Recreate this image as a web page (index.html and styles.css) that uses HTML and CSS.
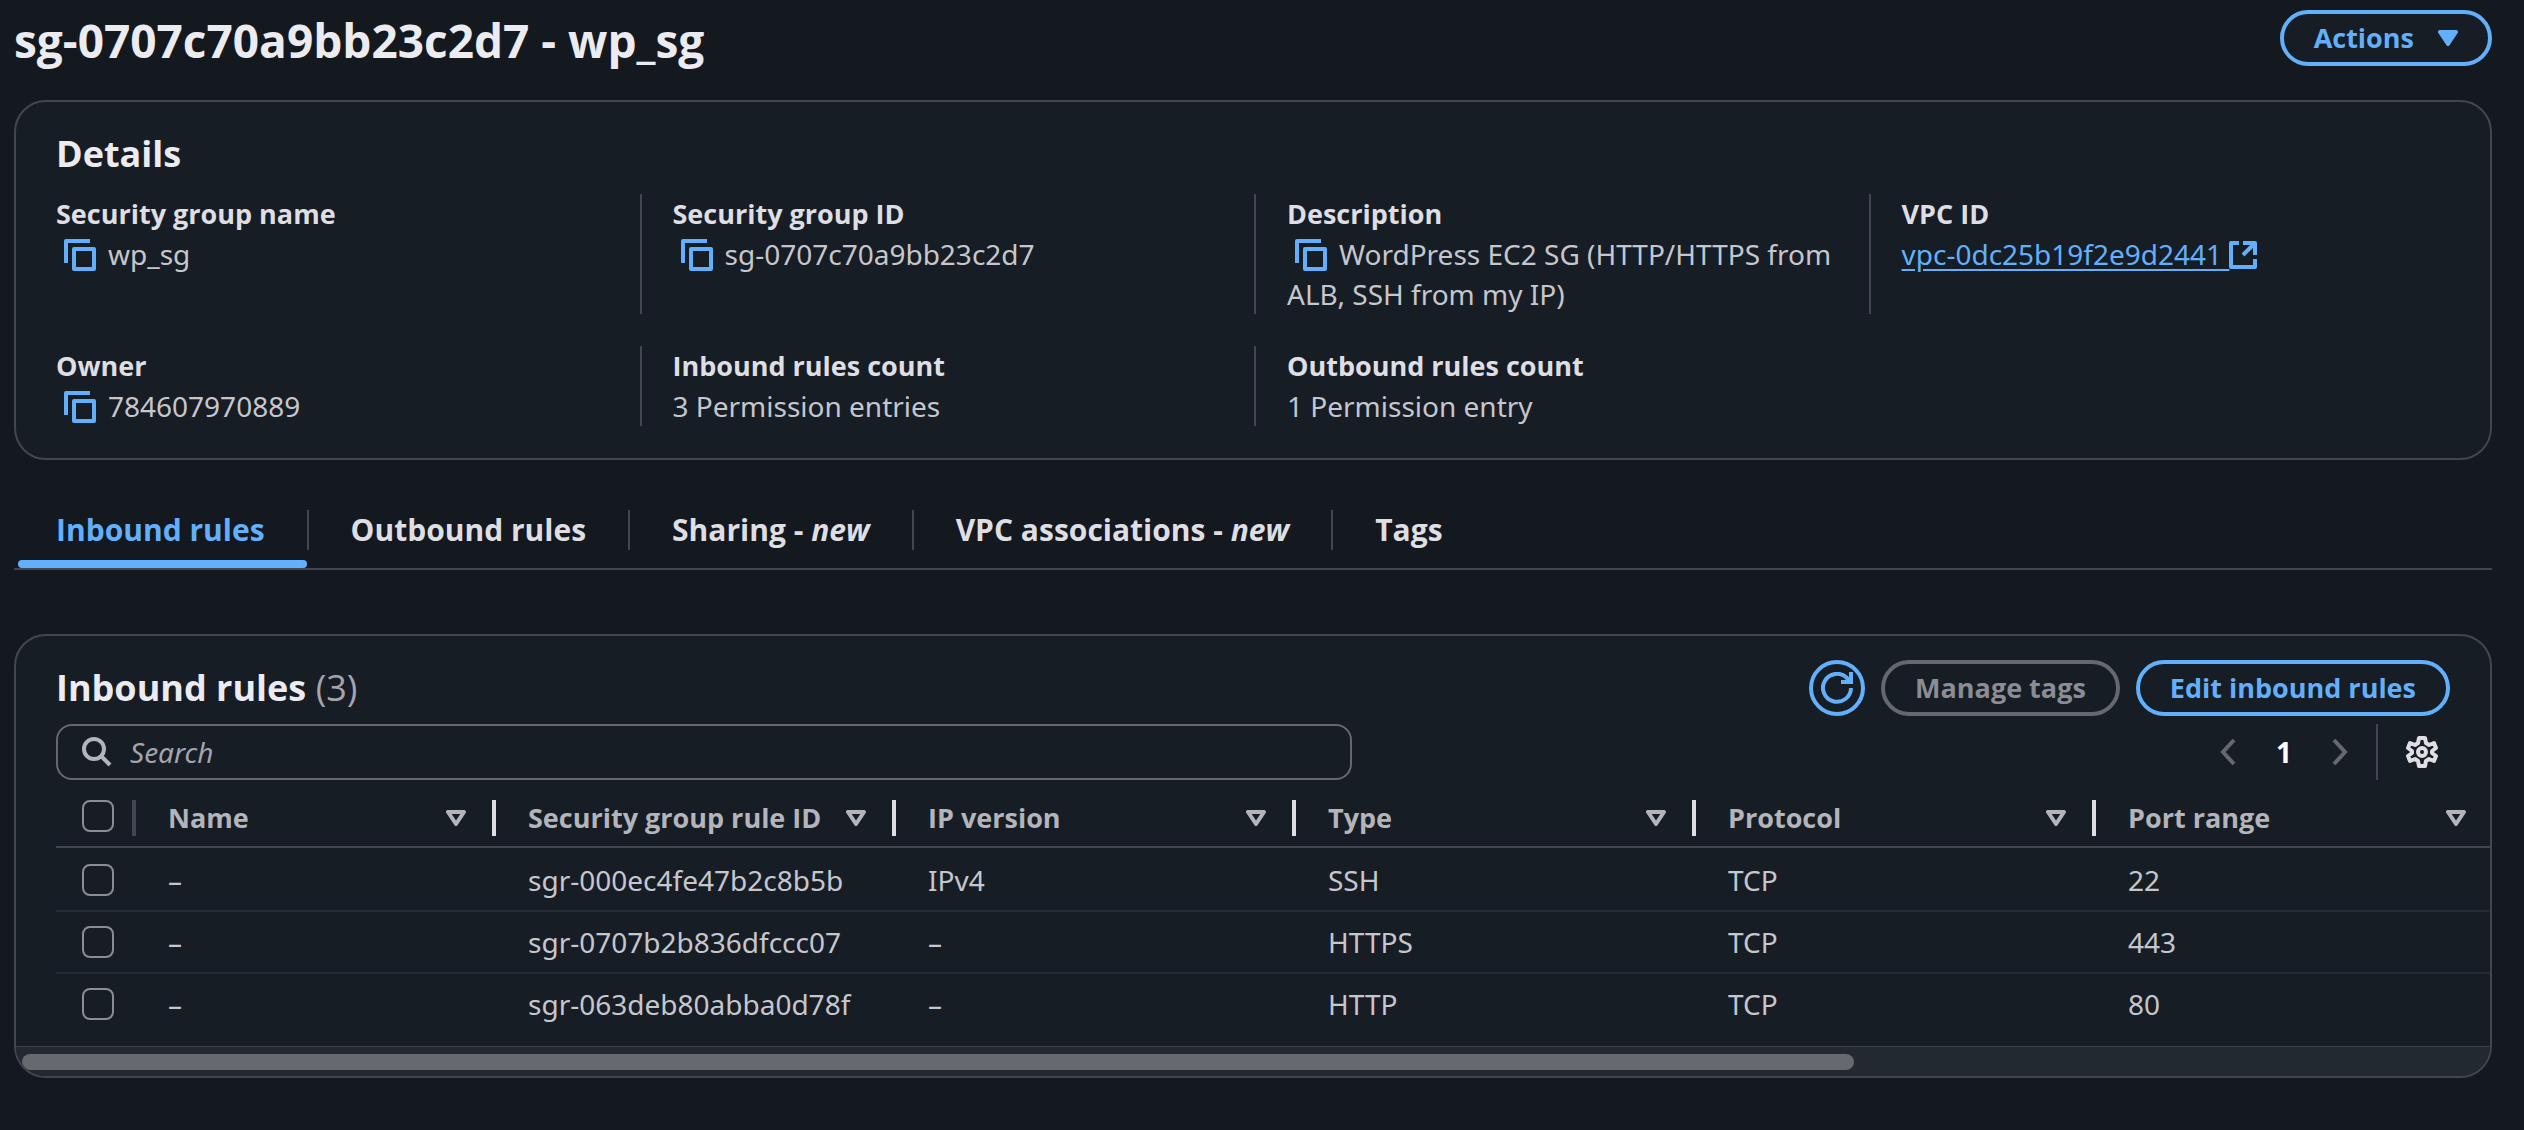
FILE: index.html
```html
<!DOCTYPE html>
<html lang="en">
<head>
<meta charset="utf-8">
<title>sg-0707c70a9bb23c2d7 - wp_sg</title>
<link rel="stylesheet" href="styles.css">
</head>
<body>
<svg class="sprite" aria-hidden="true">
  <symbol id="i-copy" viewBox="0 0 16 16"><path d="M1 12V1h12M5 5h10v10H5z" fill="none" stroke="currentColor" stroke-width="2" stroke-linejoin="round"/></symbol>
  <symbol id="i-caret" viewBox="0 0 20 16"><path d="M2 2h16l-8 12z" stroke="currentColor" stroke-width="4" stroke-linejoin="round"/></symbol>
</svg>
<main class="page">
  <header class="page-header">
    <h1>sg-0707c70a9bb23c2d7 - wp_sg</h1>
    <button type="button" class="btn">Actions <svg class="caret solid"><use href="#i-caret"/></svg></button>
  </header>

  <section class="card details">
    <h2>Details</h2>
    <dl class="grid">
      <div class="cell"><dt>Security group name</dt><dd><button type="button" class="copy" aria-label="Copy"><svg><use href="#i-copy"/></svg></button>wp_sg</dd></div>
      <div class="cell"><dt>Security group ID</dt><dd><button type="button" class="copy" aria-label="Copy"><svg><use href="#i-copy"/></svg></button>sg-0707c70a9bb23c2d7</dd></div>
      <div class="cell"><dt>Description</dt><dd><button type="button" class="copy" aria-label="Copy"><svg><use href="#i-copy"/></svg></button>WordPress EC2 SG (HTTP/HTTPS from ALB, SSH from my IP)</dd></div>
      <div class="cell"><dt>VPC ID</dt><dd><a href="#vpc">vpc-0dc25b19f2e9d2441 <svg class="ext" viewBox="0 0 28 28" fill="none" stroke="currentColor" stroke-width="4"><path d="M10 2H2v24h24v-8M14 2h12v12M26 2 14 14" stroke-linejoin="round"/></svg></a></dd></div>
      <div class="cell"><dt>Owner</dt><dd><button type="button" class="copy" aria-label="Copy"><svg><use href="#i-copy"/></svg></button>784607970889</dd></div>
      <div class="cell"><dt>Inbound rules count</dt><dd>3 Permission entries</dd></div>
      <div class="cell"><dt>Outbound rules count</dt><dd>1 Permission entry</dd></div>
    </dl>
  </section>

  <nav class="tabs">
    <a class="tab active" href="#inbound"><span>Inbound rules</span></a>
    <a class="tab" href="#outbound"><span>Outbound rules</span></a>
    <a class="tab" href="#sharing"><span>Sharing - <em>new</em></span></a>
    <a class="tab" href="#vpc"><span>VPC associations - <em>new</em></span></a>
    <a class="tab" href="#tags"><span>Tags</span></a>
  </nav>

  <section class="card rules">
    <div class="rules-header">
      <h2>Inbound rules <span class="count">(3)</span></h2>
      <div class="actions">
        <button type="button" class="btn round" aria-label="Refresh"><svg viewBox="0 0 32 32" fill="none" stroke="currentColor" stroke-width="4"><path d="M30 16a14 14 0 1 1-4-10l3 4M30 0v10H20"/></svg></button>
        <button type="button" class="btn" disabled>Manage tags</button>
        <button type="button" class="btn">Edit inbound rules</button>
      </div>
    </div>
    <div class="tools">
      <label class="search">
        <svg viewBox="0 0 30 30" fill="none" stroke="currentColor" stroke-width="4"><circle cx="12" cy="12" r="10"/><path d="m19 19 9 9"/></svg>
        <input type="search" placeholder="Search" aria-label="Search">
      </label>
      <div class="pager">
        <button type="button" class="icon" aria-label="Previous page"><svg viewBox="0 0 16 28" class="chev"><path d="M14 2 3 14l11 12"/></svg></button>
        <button type="button" class="icon current">1</button>
        <button type="button" class="icon" aria-label="Next page"><svg viewBox="0 0 16 28" class="chev"><path d="m2 2 11 12L2 26"/></svg></button>
        <button type="button" class="icon gear" aria-label="Preferences"><svg viewBox="0 0 32 32" fill="none" stroke="currentColor" stroke-width="4" stroke-linejoin="round"><path d="M13 2h6l1 5 3 2 5-2 2 5-4 3v2l4 3-2 5-5-2-3 2-1 5h-6l-1-5-3-2-5 2-2-5 4-3v-2l-4-3 2-5 5 2 3-2z"/><circle cx="16" cy="16" r="4"/></svg></button>
      </div>
    </div>
    <div class="table-wrap">
      <table>
        <thead>
          <tr>
            <th class="pick"><div class="head"><input type="checkbox" aria-label="Select all"></div></th>
            <th class="name"><div class="head">Name <svg class="caret"><use href="#i-caret"/></svg></div></th>
            <th><div class="head">Security group rule ID <svg class="caret"><use href="#i-caret"/></svg></div></th>
            <th><div class="head">IP version <svg class="caret"><use href="#i-caret"/></svg></div></th>
            <th><div class="head">Type <svg class="caret"><use href="#i-caret"/></svg></div></th>
            <th><div class="head">Protocol <svg class="caret"><use href="#i-caret"/></svg></div></th>
            <th><div class="head">Port range <svg class="caret"><use href="#i-caret"/></svg></div></th>
          </tr>
        </thead>
        <tbody>
          <tr><td class="pick"><input type="checkbox" aria-label="Select sgr-000ec4fe47b2c8b5b"></td><td>–</td><td>sgr-000ec4fe47b2c8b5b</td><td>IPv4</td><td>SSH</td><td>TCP</td><td>22</td></tr>
          <tr><td class="pick"><input type="checkbox" aria-label="Select sgr-0707b2b836dfccc07"></td><td>–</td><td>sgr-0707b2b836dfccc07</td><td>–</td><td>HTTPS</td><td>TCP</td><td>443</td></tr>
          <tr><td class="pick"><input type="checkbox" aria-label="Select sgr-063deb80abba0d78f"></td><td>–</td><td>sgr-063deb80abba0d78f</td><td>–</td><td>HTTP</td><td>TCP</td><td>80</td></tr>
        </tbody>
      </table>
    </div>
    <div class="scrollbar"><div class="thumb" style="width: 74.4%"></div></div>
  </section>
</main>
</body>
</html>
```
FILE: styles.css
```css
:root {
  --bg: #14181f;
  --card: #171d25;
  --line: #424650;
  --blue: #62b0fb;
  --heading: #ebebf0;
  --label: #dedee3;
  --text: #c6c6cd;
  --display: "Open Sans", "Noto Sans", sans-serif;
}
* { box-sizing: border-box; }
body {
  margin: 0;
  background: var(--bg);
  color: var(--text);
  font: 450 28px/40px "Noto Sans", "Open Sans", sans-serif;
}
h1, h2, dl, dd { margin: 0; }
dd { margin-right: -16px; }
button, input { font: inherit; }
h1, h2, dt, th, .btn, .tab { font-family: var(--display); }
.sprite { position: absolute; width: 0; height: 0; }
.page { padding: 10px 32px 52px 14px; }

.page-header { display: flex; justify-content: space-between; align-items: flex-start; }
h1 { font-size: 46px; line-height: 60px; font-weight: 700; color: var(--heading); }
h2 { font-size: 36px; line-height: 48px; font-weight: 700; color: var(--heading); }

.btn {
  display: inline-flex;
  align-items: center;
  justify-content: center;
  gap: 24px;
  height: 56px;
  padding: 0 30px;
  border: 4px solid var(--blue);
  border-radius: 28px;
  background: var(--card);
  color: var(--blue);
  font-size: 27px;
  font-weight: 700;
  white-space: nowrap;
}
.btn:disabled { border-color: #656871; color: #8c8c94; }
.btn.round { width: 56px; padding: 0; }
.btn.round svg { width: 32px; height: 32px; }
.caret { width: 20px; height: 16px; fill: none; color: #b4b4bb; flex: none; }
.caret.solid { fill: currentColor; color: var(--blue); }

.card {
  border: 2px solid var(--line);
  border-radius: 32px;
  background: var(--card);
  overflow: hidden;
}
.details { margin-top: 30px; padding: 28px 40px 32px; }
.grid {
  display: grid;
  grid-template-columns: repeat(4, 1fr);
  gap: 32px 64px;
  margin-top: 16px;
}
.cell { margin-left: -31px; padding-left: 31px; border-left: 2px solid var(--line); }
.cell:nth-child(4n + 1) { margin-left: 0; padding-left: 0; border-left: 0; }
dt { font-size: 27px; font-weight: 700; color: var(--label); }
.copy {
  width: 32px;
  height: 32px;
  margin: 0 12px 0 8px;
  padding: 0;
  border: 0;
  background: none;
  color: var(--blue);
  vertical-align: -6px;
  line-height: 0;
}
.copy svg { width: 32px; height: 32px; }
a { color: var(--blue); text-underline-offset: 4px; }
.ext { width: 28px; height: 28px; vertical-align: -4px; }

.tabs { display: flex; margin-top: 36px; border-bottom: 2px solid var(--line); }
.tab {
  height: 72px;
  padding-top: 14px;
  color: var(--label);
  font-size: 30px;
  font-weight: 700;
  text-decoration: none;
  white-space: nowrap;
}
.tab span { display: block; padding: 0 42px; border-right: 2px solid var(--line); }
.tab:last-child span { border-right: 0; }
.tab.active { position: relative; color: var(--blue); }
.tab.active::after {
  content: "";
  position: absolute;
  left: 4px;
  right: 2px;
  bottom: 0;
  height: 8px;
  border-radius: 4px;
  background: var(--blue);
}

.rules { margin-top: 64px; }
.rules-header { display: flex; justify-content: space-between; align-items: center; padding: 24px 40px 0; }
.count { font-weight: 400; color: #a4a4ad; }
.actions { display: flex; gap: 16px; }
.tools { display: flex; justify-content: space-between; padding: 8px 40px 0; }
.search {
  display: flex;
  align-items: center;
  gap: 18px;
  flex: 1;
  max-width: 1296px;
  height: 56px;
  padding: 0 24px;
  border: 2px solid #656871;
  border-radius: 16px;
}
.search svg { width: 30px; height: 30px; color: #b4b4bb; }
.search input { flex: 1; padding: 0; border: 0; outline: 0; background: none; color: var(--text); }
.search input::placeholder { color: #a4a4ad; font-style: italic; opacity: 1; }
.pager { display: flex; align-items: center; }
.icon {
  display: flex;
  align-items: center;
  justify-content: center;
  width: 56px;
  height: 56px;
  padding: 0;
  border: 0;
  background: none;
  color: #656871;
}
.chev { width: 16px; height: 28px; fill: none; stroke: currentColor; stroke-width: 4; }
.current { color: #fff; font-weight: 700; }
.gear { width: 74px; margin-left: 8px; padding-left: 16px; border-left: 2px solid var(--line); color: var(--label); }
.gear svg { width: 32px; height: 32px; }

.table-wrap { padding: 0 0 10px 40px; overflow: hidden; }
table { width: 2440px; table-layout: fixed; border-collapse: separate; border-spacing: 0; }
th, td { padding: 0; border-bottom: 2px solid #232b37; text-align: left; }
th { height: 68px; padding-top: 10px; border-color: var(--line); color: #b4b4bb; font-size: 27px; font-weight: 700; }
td { height: 62px; padding-left: 32px; }
tbody tr:first-child td { height: 64px; padding-top: 2px; }
tbody tr:last-child td { border-bottom-color: transparent; }
.pick { width: 80px; }
td.pick { padding-left: 26px; }
.name { width: 360px; }
.head {
  display: flex;
  align-items: center;
  justify-content: space-between;
  height: 36px;
  padding: 0 26px 0 32px;
  border-right: 4px solid var(--label);
  white-space: nowrap;
}
.pick .head { padding: 0 0 4px 26px; border-color: var(--line); }
input[type="checkbox"] {
  display: block;
  appearance: none;
  width: 32px;
  height: 32px;
  margin: 0;
  border: 2px solid #8c8c94;
  border-radius: 8px;
}
.scrollbar { height: 30px; padding: 7px 6px; border-top: 1px solid #3a4048; background: #232931; }
.thumb { height: 16px; border-radius: 8px; background: #666a6e; }
```
